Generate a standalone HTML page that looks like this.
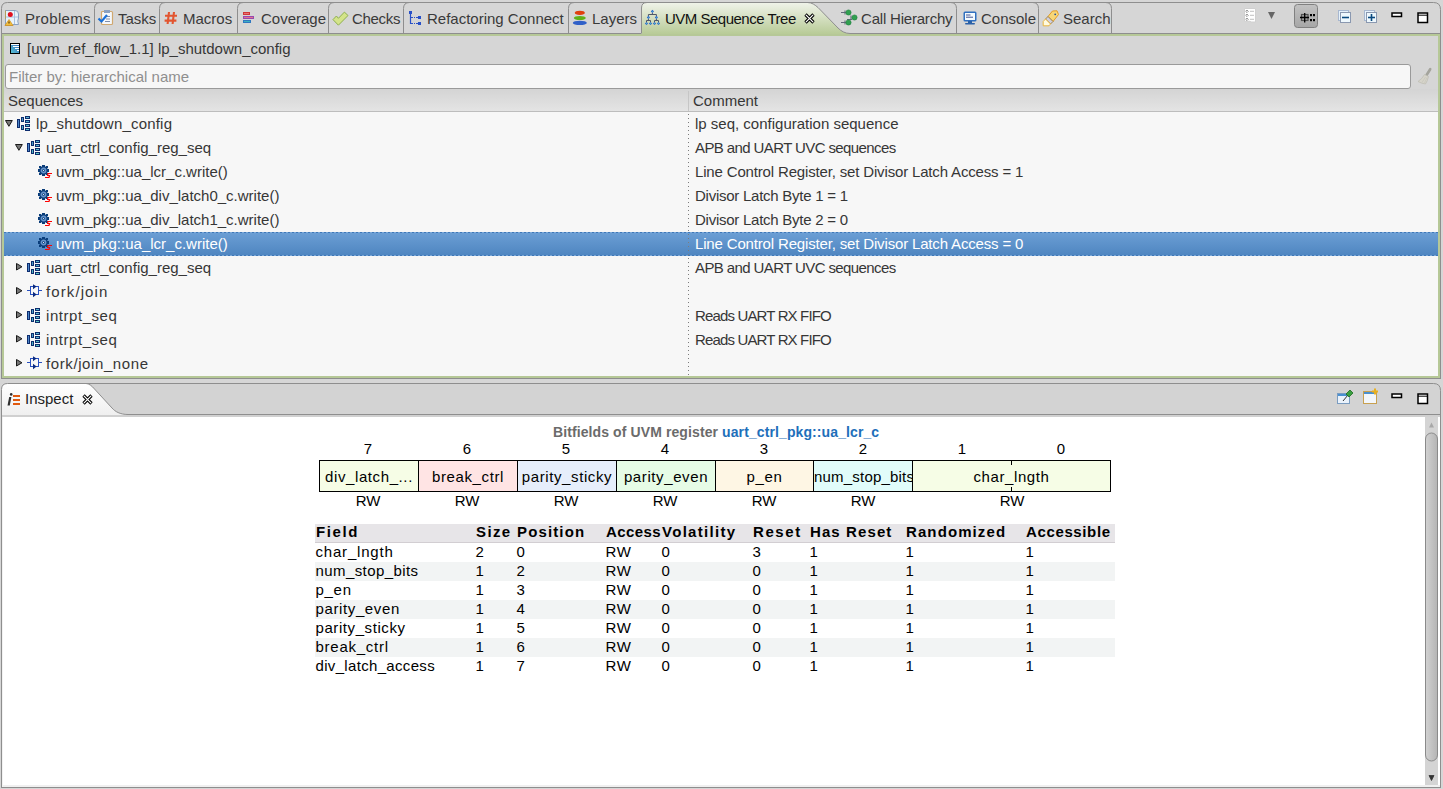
<!DOCTYPE html>
<html><head><meta charset="utf-8"><style>
*{box-sizing:border-box;margin:0;padding:0}
html,body{width:1443px;height:789px;overflow:hidden;background:#d6d6d6;font-family:"Liberation Sans",sans-serif;color:#363636}
.a{position:absolute}
.t{position:absolute;white-space:pre;font-size:15px;line-height:18px}
.tab{position:absolute;top:10px;font-size:15px;line-height:18px;white-space:pre;color:#3a3a3a}
#toppanel{left:1px;top:33px;width:1440px;height:346px;border:1px solid #8e8e8e;border-top:none;background:#d6d6d6}
#green{left:2px;top:34px;width:1438px;height:344px;border:2px solid #b6c897}
#filter{left:5px;top:64px;width:1406px;height:25px;border:1px solid #9a9a9a;border-radius:3px;background:#f7f7f7}
#hdr{left:4px;top:89px;width:1434px;height:23px;background:linear-gradient(#d4d4d4,#e4e4e4);border-bottom:1px solid #bdbdbd}
#tree{left:4px;top:112px;width:1434px;height:264px;background:#f7f7f7}
#sel{left:4px;top:232px;width:1434px;height:24px;background:linear-gradient(#6c9fd5,#4e85c0)}
.dash{position:absolute;left:4px;width:1434px;height:1px;background:repeating-linear-gradient(90deg,#3f78b8 0 2px,#7aa8d8 2px 4px)}
.dot{position:absolute;left:688px;top:114px;width:1px;height:262px;background:repeating-linear-gradient(#7c7c7c 0 1px,transparent 1px 4px)}
#ipanel{left:1px;top:383px;width:1440px;height:406px;border:1px solid #8c8c8c;border-radius:7px 7px 0 0;background:#d2d2d2}
#icontent{left:2px;top:416px;width:1438px;height:371px;background:#fff}
.bx{position:absolute;top:460px;height:32px;border:1px solid #000;font-size:15px;line-height:32px;letter-spacing:0.6px;text-align:center;color:#000;white-space:pre;overflow:hidden}
.num{position:absolute;top:440px;font-size:15px;line-height:18px;color:#000;width:20px;text-align:center}
.rw{position:absolute;top:492px;font-size:15px;line-height:18px;color:#000;width:40px;text-align:center}
.c{position:absolute;font-size:15px;line-height:19px;color:#000;white-space:pre;letter-spacing:0.6px}
</style></head><body>
<svg width="0" height="0" style="position:absolute"><defs>
<linearGradient id="ag" x1="0" y1="0" x2="0" y2="1"><stop offset="0" stop-color="#f0f3ea"/><stop offset="1" stop-color="#b8cb97"/></linearGradient>
<g id="i-seq" stroke="#0d2c6e" stroke-width="1">
<rect x="0.5" y="3.5" width="2" height="8" fill="#4a86c8"/>
<rect x="4.5" y="1.5" width="2" height="4" fill="#4a9cc8"/>
<rect x="4.5" y="9.5" width="2" height="4" fill="#4ab0c0"/>
<rect x="8.5" y="0.5" width="4" height="2" fill="#5ab8d0"/>
<rect x="8.5" y="4.5" width="4" height="2" fill="#5ab8d0"/>
<rect x="8.5" y="8.5" width="4" height="2" fill="#5ac0c8"/>
<rect x="8.5" y="12.5" width="4" height="2" fill="#5ac8c0"/>
</g>
<g id="i-gear">
<g fill="#0a3d7a"><rect x="5" y="1" width="3" height="2"/><rect x="5" y="10" width="3" height="2"/><rect x="1" y="5" width="2" height="3"/><rect x="10" y="5" width="2" height="3"/><rect x="2" y="2" width="2.2" height="2.2"/><rect x="8.8" y="2" width="2.2" height="2.2"/><rect x="2" y="8.8" width="2.2" height="2.2"/><rect x="8.8" y="8.8" width="2.2" height="2.2"/></g>
<circle cx="6.5" cy="6.5" r="3.6" fill="#6694cc" stroke="#0a3d7a" stroke-width="1.3"/>
<circle cx="6.5" cy="6.5" r="1.3" fill="#0a3d7a"/>
<circle cx="6.5" cy="6.5" r="0.55" fill="#fff"/>
<path d="M15 9.5 H11 L10.6 11.5 H12.6 L12 13.5 H8" fill="none" stroke="#ff0000" stroke-width="1.2"/>
</g>
<g id="i-fork">
<rect x="3.5" y="2.5" width="8" height="8" fill="none" stroke="#2850c0"/>
<path d="M0 6.5 H3.5 M11.5 6.5 H15" stroke="#2850c0"/>
<path d="M6 0.3 L9.6 2.5 L6 5.2 Z M6 7.8 L9.6 10.5 L6 13.2 Z" fill="#0a2a80"/>
</g>
</defs></svg>
<div id="toppanel" class="a"></div><div id="green" class="a"></div><div id="filter" class="a"></div><div id="hdr" class="a"></div><div id="tree" class="a"></div><div id="sel" class="a"></div><div class="dash" style="top:232px"></div><div class="dash" style="top:255px"></div><div class="dot"></div>
<svg class="a" style="left:10px;top:43px" width="10" height="11"><defs><linearGradient id="tg" x1="1" y1="0" x2="0" y2="1"><stop offset="0" stop-color="#3468b8"/><stop offset="1" stop-color="#5cc8d8"/></linearGradient></defs><rect x="0.5" y="0.5" width="9" height="10" fill="url(#tg)" stroke="#000"/><path d="M1 1.5 H9 M3 3.5 H9 M5 5.5 H9 M7 7.5 H9" stroke="#fff" stroke-width="1"/></svg>
<div class="t" style="left:27px;top:40px">[uvm_ref_flow_1.1] lp_shutdown_config</div>
<div class="t" style="left:9px;top:68px;color:#8f8f8f">Filter by: hierarchical name</div>
<div class="t" style="left:8px;top:92px">Sequences</div>
<div class="a" style="left:688px;top:91px;width:1px;height:20px;background:#c6c6c6"></div>
<div class="t" style="left:693px;top:92px">Comment</div>
<svg class="a" style="left:5px;top:120px" width="8" height="7"><path d="M0.5 0.5 H7.3 L3.9 6.3 Z" fill="#777" stroke="#1a1a1a" stroke-width="1"/></svg>
<svg class="a" style="left:17px;top:116px" width="13" height="15"><use href="#i-seq"/></svg>
<div class="t" style="left:36px;top:115px;color:#363636;letter-spacing:0.2px">lp_shutdown_config</div>
<div class="t" style="left:695px;top:115px;color:#363636;letter-spacing:0px">lp seq, configuration sequence</div>
<svg class="a" style="left:15px;top:144px" width="8" height="7"><path d="M0.5 0.5 H7.3 L3.9 6.3 Z" fill="#777" stroke="#1a1a1a" stroke-width="1"/></svg>
<svg class="a" style="left:27px;top:140px" width="13" height="15"><use href="#i-seq"/></svg>
<div class="t" style="left:46px;top:139px;color:#363636;letter-spacing:0px">uart_ctrl_config_reg_seq</div>
<div class="t" style="left:695px;top:139px;color:#363636;letter-spacing:-0.6px">APB and UART UVC sequences</div>
<svg class="a" style="left:37px;top:164px" width="16" height="15"><use href="#i-gear"/></svg>
<div class="t" style="left:56px;top:163px;color:#363636;letter-spacing:0px">uvm_pkg::ua_lcr_c.write()</div>
<div class="t" style="left:695px;top:163px;color:#363636;letter-spacing:-0.16px">Line Control Register, set Divisor Latch Access = 1</div>
<svg class="a" style="left:37px;top:188px" width="16" height="15"><use href="#i-gear"/></svg>
<div class="t" style="left:56px;top:187px;color:#363636;letter-spacing:0px">uvm_pkg::ua_div_latch0_c.write()</div>
<div class="t" style="left:695px;top:187px;color:#363636;letter-spacing:-0.25px">Divisor Latch Byte 1 = 1</div>
<svg class="a" style="left:37px;top:212px" width="16" height="15"><use href="#i-gear"/></svg>
<div class="t" style="left:56px;top:211px;color:#363636;letter-spacing:0px">uvm_pkg::ua_div_latch1_c.write()</div>
<div class="t" style="left:695px;top:211px;color:#363636;letter-spacing:-0.25px">Divisor Latch Byte 2 = 0</div>
<svg class="a" style="left:37px;top:236px" width="16" height="15"><use href="#i-gear"/></svg>
<div class="t" style="left:56px;top:235px;color:#fff;letter-spacing:0px">uvm_pkg::ua_lcr_c.write()</div>
<div class="t" style="left:695px;top:235px;color:#fff;letter-spacing:-0.16px">Line Control Register, set Divisor Latch Access = 0</div>
<svg class="a" style="left:16px;top:263px" width="7" height="8"><path d="M0.5 0.5 V7 L6 3.75 Z" fill="#777" stroke="#1a1a1a" stroke-width="1"/></svg>
<svg class="a" style="left:27px;top:260px" width="13" height="15"><use href="#i-seq"/></svg>
<div class="t" style="left:46px;top:259px;color:#363636;letter-spacing:0px">uart_ctrl_config_reg_seq</div>
<div class="t" style="left:695px;top:259px;color:#363636;letter-spacing:-0.6px">APB and UART UVC sequences</div>
<svg class="a" style="left:16px;top:287px" width="7" height="8"><path d="M0.5 0.5 V7 L6 3.75 Z" fill="#777" stroke="#1a1a1a" stroke-width="1"/></svg>
<svg class="a" style="left:27px;top:284px" width="15" height="14"><use href="#i-fork"/></svg>
<div class="t" style="left:46px;top:283px;color:#363636;letter-spacing:1.1px">fork/join</div>
<svg class="a" style="left:16px;top:311px" width="7" height="8"><path d="M0.5 0.5 V7 L6 3.75 Z" fill="#777" stroke="#1a1a1a" stroke-width="1"/></svg>
<svg class="a" style="left:27px;top:308px" width="13" height="15"><use href="#i-seq"/></svg>
<div class="t" style="left:46px;top:307px;color:#363636;letter-spacing:0.55px">intrpt_seq</div>
<div class="t" style="left:695px;top:307px;color:#363636;letter-spacing:-0.85px">Reads UART RX FIFO</div>
<svg class="a" style="left:16px;top:335px" width="7" height="8"><path d="M0.5 0.5 V7 L6 3.75 Z" fill="#777" stroke="#1a1a1a" stroke-width="1"/></svg>
<svg class="a" style="left:27px;top:332px" width="13" height="15"><use href="#i-seq"/></svg>
<div class="t" style="left:46px;top:331px;color:#363636;letter-spacing:0.55px">intrpt_seq</div>
<div class="t" style="left:695px;top:331px;color:#363636;letter-spacing:-0.85px">Reads UART RX FIFO</div>
<svg class="a" style="left:16px;top:359px" width="7" height="8"><path d="M0.5 0.5 V7 L6 3.75 Z" fill="#777" stroke="#1a1a1a" stroke-width="1"/></svg>
<svg class="a" style="left:27px;top:356px" width="15" height="14"><use href="#i-fork"/></svg>
<div class="t" style="left:46px;top:355px;color:#363636;letter-spacing:0.6px">fork/join_none</div>
<svg class="a" style="left:0;top:0" width="1443" height="36">
<path d="M641.5 34 V8 Q641.5 2.5 647 2.5 H807.5 C812 2.5 815 5 818 7.5 L838 28 C841 31 845 33.5 850 33.5 L850 34 Z" fill="url(#ag)"/>
<g fill="none" stroke="#8e8e8e" stroke-width="1">
<path d="M1.5 34 V8.5 Q1.5 2.5 7.5 2.5 H1433.5 Q1440.5 2.5 1440.5 9.5 V34"/>
<path d="M94.5 33 V8.5 Q94.5 2.5 100.5 2.5"/>
<path d="M159.5 33 V8.5 Q159.5 2.5 165.5 2.5"/>
<path d="M237.5 33 V8.5 Q237.5 2.5 243.5 2.5"/>
<path d="M328.5 33 V8.5 Q328.5 2.5 334.5 2.5"/>
<path d="M403.5 33 V8.5 Q403.5 2.5 409.5 2.5"/>
<path d="M568.5 33 V8.5 Q568.5 2.5 574.5 2.5"/>
<path d="M641.5 33.5 V8 Q641.5 2.5 647 2.5 H807.5 C812 2.5 815 5 818 7.5 L838 28 C841 31 845 33.5 850 33.5"/>
<path d="M956.5 33 V8.5 Q956.5 2.5 950.5 2.5"/>
<path d="M1038.5 33 V8.5 Q1038.5 2.5 1032.5 2.5"/>
<path d="M1111.5 33 V8.5 Q1111.5 2.5 1105.5 2.5"/>
<path d="M1 33.5 H641 M850 33.5 H1441"/>
</g></svg>
<svg class="a" style="left:4px;top:9px" width="16" height="18"><path d="M1.5 1.5 H11 Q14.5 1.5 14.5 5 V9 Q13 12 14.5 15.5 H9 V16.5 H1.5 Z" fill="#e8f2fa" stroke="#8aa0c0" stroke-width="1"/><path d="M1.5 1.5 V10" stroke="#b0a060"/><path d="M10.5 2 V15 M2 8 H14" stroke="#a8c0e0"/><circle cx="6.3" cy="5.5" r="2.5" fill="#e01020"/><path d="M1 16.5 L5 10.5 L9 16.5 Z" fill="#f0c040" stroke="#d09020" stroke-width="0.8"/><path d="M5 12.5 V14.5" stroke="#402000" stroke-width="1"/></svg>
<svg class="a" style="left:97px;top:9px" width="17" height="17"><rect x="4.5" y="2.5" width="11" height="13" rx="1" fill="#f4f8fc" stroke="#d0a870" stroke-width="1.2"/><rect x="7" y="1" width="6" height="3" fill="#8aa0c0"/><path d="M9 7.5 H13 M9 10 H13 M8 12.5 H13" stroke="#7080a0" stroke-width="0.9"/><path d="M1.5 9.5 L4.5 12.5 L10 6" fill="none" stroke="#1a70d8" stroke-width="2.2"/></svg>
<svg class="a" style="left:164px;top:11px" width="14" height="14"><path d="M5 1 L3.6 13 M10 1 L8.6 13 M1 4.8 H13 M0.6 9.6 H12.4" stroke="#e25530" stroke-width="2.1"/></svg>
<svg class="a" style="left:243px;top:12px" width="12" height="11"><rect x="0" y="0" width="7" height="3" fill="#d03838"/><rect x="0" y="4" width="11" height="3" fill="#9848b0"/><rect x="0" y="8" width="8" height="3" fill="#3078c0"/><path d="M1 1.5 H6 M1 5.5 H10" stroke="#f08080" stroke-width="0.8"/><path d="M1 9.5 H7" stroke="#40c0c0" stroke-width="0.8"/></svg>
<svg class="a" style="left:332px;top:11px" width="17" height="16"><path d="M1 8.6 L4.4 5 L6.4 7.3 L12.4 1.1 L16 4.5 L6.4 14.2 Z" fill="#d4e48a" stroke="#8fb050" stroke-width="1"/></svg>
<svg class="a" style="left:408px;top:10px" width="15" height="16"><g fill="#2850c8"><rect x="1" y="1" width="3" height="3"/><rect x="10" y="6" width="3" height="3"/><rect x="10" y="12" width="3" height="3"/></g><path d="M2.5 4 V13.5 H5 M2.5 7.5 H5" stroke="#2850c8" stroke-width="1.2" fill="none"/><path d="M6 7.5 H7 M8 7.5 H10 M6 13.5 H7 M8 13.5 H10" stroke="#2850c8" stroke-width="1"/></svg>
<svg class="a" style="left:572px;top:9px" width="16" height="17"><ellipse cx="7.8" cy="3.8" rx="5" ry="2.1" fill="#e04010"/><ellipse cx="7.8" cy="9" rx="6" ry="2.1" fill="#60b018"/><ellipse cx="7.8" cy="13.9" rx="7" ry="2.2" fill="#3060c8"/></svg>
<svg class="a" style="left:644px;top:8px" width="17" height="18"><g stroke="#505868" stroke-width="1" fill="none"><path d="M8.4 5 V6.5 M4.4 8 V6.5 H12.4 V8 M2.5 14 V12.5 H6.5 V14 M10.5 14 V12.5 H14.5 V14 M4.4 11 V12.5 M12.4 11 V12.5"/></g><path d="M8.4 1.7999999999999998 L10.0 3.4 L8.4 5.0 L6.800000000000001 3.4 Z M4.4 7.800000000000001 L6.0 9.4 L4.4 11.0 L2.8000000000000003 9.4 Z M12.4 7.800000000000001 L14.0 9.4 L12.4 11.0 L10.8 9.4 Z M2.5 13.9 L4.1 15.5 L2.5 17.1 L0.8999999999999999 15.5 Z M6.5 13.9 L8.1 15.5 L6.5 17.1 L4.9 15.5 Z M10.5 13.9 L12.1 15.5 L10.5 17.1 L8.9 15.5 Z M14.5 13.9 L16.1 15.5 L14.5 17.1 L12.9 15.5 Z" fill="#2a5ad0"/><rect x="7.9" y="2.9" width="1" height="1" fill="#40c0c0"/><rect x="3.9000000000000004" y="8.9" width="1" height="1" fill="#40c0c0"/><rect x="11.9" y="8.9" width="1" height="1" fill="#40c0c0"/><rect x="2.0" y="15.0" width="1" height="1" fill="#40c0c0"/><rect x="6.0" y="15.0" width="1" height="1" fill="#40c0c0"/><rect x="10.0" y="15.0" width="1" height="1" fill="#40c0c0"/><rect x="14.0" y="15.0" width="1" height="1" fill="#40c0c0"/></svg>
<svg class="a" style="left:804px;top:13px" width="11" height="11"><path d="M1.5 1.5 L9.5 9.5 M9.5 1.5 L1.5 9.5" stroke="#000" stroke-width="3.2"/><path d="M1.9 1.9 L9.1 9.1 M9.1 1.9 L1.9 9.1" stroke="#fff" stroke-width="1.2"/></svg>
<svg class="a" style="left:840px;top:9px" width="18" height="17"><path d="M1 3.5 H6 M7 10.5 H12 M1 13.5 H6 M5 1.5 V5.5 M11 6.5 V10.5 M5 11.5 V15.5" stroke="#606878" stroke-width="1.1"/><circle cx="8.5" cy="3.5" r="2.6" fill="#30a050" stroke="#208040" stroke-width="0.6"/><circle cx="14.5" cy="8.5" r="2.6" fill="#30a050" stroke="#208040" stroke-width="0.6"/><circle cx="8.5" cy="13.5" r="2.6" fill="#30a050" stroke="#208040" stroke-width="0.6"/></svg>
<svg class="a" style="left:963px;top:11px" width="14" height="14"><rect x="0.5" y="0.5" width="13" height="10" rx="1.5" fill="#3070c0"/><rect x="2" y="2" width="10" height="7" fill="#f4fbff"/><path d="M3 4 H7.5 M3 6.2 H10" stroke="#405090" stroke-width="1"/><rect x="5" y="10" width="4" height="2" fill="#2a60a8"/><rect x="2" y="12" width="10" height="1.6" rx="0.8" fill="#2a60a8"/></svg>
<svg class="a" style="left:1042px;top:10px" width="18" height="17"><path d="M10.5 1 L15 0.8 L16.5 4.5 L11 11.5 L6 6.5 Z" fill="#f7d676" stroke="#e49c24" stroke-width="1"/><circle cx="13.2" cy="4.3" r="0.9" fill="#2050a0"/><path d="M6 6.5 L11 11.5 L8.5 14 L3.5 9 Z" fill="#cfcfdf" stroke="#9a7a40" stroke-width="0.9"/><path d="M3.5 9 L8.5 14 L7 15.8 H1.2 V11.5 Z" fill="#fffbe0" stroke="#eab030" stroke-width="0.9"/></svg>
<svg class="a" style="left:1244px;top:8px" width="12" height="15"><path d="M0.5 0.5 H11.5 V14 H7 L6 13.3 H0.5 Z" fill="#fff" stroke="#d0d0d0"/><g fill="none" stroke="#808080" stroke-width="0.8"><path d="M3 2 L4.3 3.3 L3 4.6 L1.7 3.3 Z M3 6 L4.3 7.3 L3 8.6 L1.7 7.3 Z M3 10 L4.3 11.3 L3 12.6 L1.7 11.3 Z"/><path d="M6 3.3 H10 M6 7.3 H10 M6 11.3 H10" stroke="#b0b0b0"/></g></svg>
<svg class="a" style="left:1268px;top:12px" width="8" height="8"><path d="M0 0 H7 L3.5 7 Z" fill="#666"/></svg>
<svg class="a" style="left:1294px;top:4px" width="24" height="24"><defs><linearGradient id="pb" x1="0" y1="0" x2="0" y2="1"><stop offset="0" stop-color="#c2c2c2"/><stop offset="1" stop-color="#a6a6a6"/></linearGradient></defs><rect x="0.5" y="0.5" width="23" height="23" rx="3" fill="url(#pb)" stroke="#808080"/><rect x="7.5" y="10.5" width="6.5" height="6" fill="#a0a0a0" stroke="#505050" stroke-width="1.2"/><path d="M6 13.5 H15 M10.7 9 V18.5" stroke="#000" stroke-width="1.3"/><g fill="#000"><rect x="16" y="10" width="2" height="2.2"/><rect x="19" y="10" width="2" height="2.2"/><rect x="16" y="15" width="2" height="2.2"/><rect x="19" y="15" width="2" height="2.2"/></g></svg>
<svg class="a" style="left:1338px;top:10px" width="14" height="14"><rect x="0.5" y="0.5" width="10" height="10" fill="#e6f2fb" stroke="#a8b8d0"/><rect x="2.5" y="2.5" width="10" height="10" fill="#eef8fd" stroke="#8a98b0"/><path d="M4 7.5 H11" stroke="#0a4a80" stroke-width="1.6"/></svg>
<svg class="a" style="left:1364px;top:10px" width="14" height="14"><rect x="0.5" y="0.5" width="10" height="10" fill="#e6f2fb" stroke="#a8b8d0"/><rect x="2.5" y="2.5" width="10" height="10" fill="#eef8fd" stroke="#8a98b0"/><path d="M4 7.5 H11" stroke="#0a4a80" stroke-width="1.6"/><path d="M7.5 4 V11" stroke="#0a4a80" stroke-width="1.6"/></svg>
<svg class="a" style="left:1391px;top:12px" width="12" height="6"><rect x="1" y="1" width="9.5" height="3.5" fill="#fff" stroke="#000" stroke-width="1.5"/></svg>
<svg class="a" style="left:1417px;top:12px" width="12" height="12"><rect x="1" y="1" width="9.5" height="9.5" fill="#fff" stroke="#000" stroke-width="1.5"/><path d="M1 3.2 H10.5" stroke="#000" stroke-width="1"/></svg>
<svg class="a" style="left:1417px;top:67px" width="16" height="18"><path d="M13.2 2.2 L9.6 8" stroke="#a4a49c" stroke-width="2.6" stroke-linecap="round"/><path d="M7.5 7.5 L11.5 9.5 Q10.5 14 8.5 17 Q4.5 16.5 1 14.5 Q5 12 7.5 7.5 Z" fill="#d6d4ca" stroke="#bdbbb2" stroke-width="0.7"/><path d="M8.5 10 L5 15.5 M10 10.5 L7.5 16" stroke="#c4c2b8" stroke-width="0.6"/></svg>
<div class="tab" style="left:25px;letter-spacing:0.3px">Problems</div>
<div class="tab" style="left:118px;">Tasks</div>
<div class="tab" style="left:183px;">Macros</div>
<div class="tab" style="left:261px;">Coverage</div>
<div class="tab" style="left:352px;letter-spacing:-0.3px">Checks</div>
<div class="tab" style="left:427px;">Refactoring Connect</div>
<div class="tab" style="left:592px;">Layers</div>
<div class="tab" style="left:665px;color:#111;letter-spacing:-0.5px">UVM Sequence Tree</div>
<div class="tab" style="left:861px;letter-spacing:-0.2px">Call Hierarchy</div>
<div class="tab" style="left:981px;">Console</div>
<div class="tab" style="left:1063px;">Search</div>
<svg class="a" style="left:0;top:376px" width="1443" height="413">
<defs><linearGradient id="ig" x1="0" y1="0" x2="0" y2="1"><stop offset="0" stop-color="#ffffff"/><stop offset="1" stop-color="#efefef"/></linearGradient></defs>
<path d="M1.5 411.5 V13.5 Q1.5 7.5 7.5 7.5 H1433.5 Q1440.5 7.5 1440.5 14.5 V411.5 Z" fill="#d3d3d3"/>
<path d="M1.5 39 V13.5 Q1.5 7.5 7.5 7.5 H86 C89 7.5 92 10 94.5 13 L112 32 C115 35.5 120 38.5 128 38.5 H1440.5 V39 Z" fill="url(#ig)"/>
<g fill="none" stroke="#8e8e8e"><path d="M1.5 412 V13.5 Q1.5 7.5 7.5 7.5 H1433.5 Q1440.5 7.5 1440.5 14.5 V412"/><path d="M86 7.5 C89 7.5 92 10 94.5 13 L112 32 C115 35.5 120 38.5 128 38.5 H1440"/><path d="M1.5 411.5 H1440.5"/></g>
</svg>
<div class="a" style="left:2px;top:415px;width:1438px;height:2px;background:#d0d0d0"></div>
<div class="a" style="left:2px;top:417px;width:1438px;height:370px;background:#fff;border-left:1px solid #f2f2f2;border-bottom:2px solid #f0f0f0"></div>
<svg class="a" style="left:6px;top:392px" width="16" height="14"><path d="M3.2 5 H5.4 L3.8 13.5 H1.5 Z" fill="#303030"/><circle cx="5.2" cy="2.4" r="1.3" fill="#303030"/><path d="M7 4 H14 M7 8 H14 M7 12 H14" stroke="#e05a10" stroke-width="2"/></svg>
<div class="tab" style="left:25px;top:390px;color:#222">Inspect</div>
<svg class="a" style="left:82px;top:394px" width="11" height="11"><path d="M1.5 1.5 L9.5 9.5 M9.5 1.5 L1.5 9.5" stroke="#000" stroke-width="3.2"/><path d="M1.9 1.9 L9.1 9.1 M9.1 1.9 L1.9 9.1" stroke="#fff" stroke-width="1.2"/></svg>
<div class="a" style="left:1425px;top:417px;width:13px;height:368px;background:#d4d4d4"></div>
<svg class="a" style="left:1425px;top:417px" width="13" height="368">
<defs><linearGradient id="thumb" x1="0" y1="0" x2="1" y2="0"><stop offset="0" stop-color="#d2d2d2"/><stop offset="1" stop-color="#b4b4b4"/></linearGradient></defs>
<path d="M4 10.5 L6.5 5.5 L9 10.5 Z" fill="#a8a8a8"/>
<rect x="0.5" y="16" width="12" height="328" rx="6" fill="url(#thumb)" stroke="#8a8a8a"/>
<path d="M4 358.5 H9 L6.5 363.5 Z" fill="#333" stroke="#333" stroke-width="0.8"/>
</svg>
<svg class="a" style="left:1336px;top:389px" width="18" height="16"><rect x="1.5" y="4.5" width="12" height="10" fill="#eaf2fb" stroke="#7a9cc0"/><rect x="2" y="5" width="11" height="2" fill="#4a90d0"/><path d="M7 12 L12 6" stroke="#333" stroke-width="1"/><path d="M10 5 L14 1 L17 4 L13 8 Z" fill="#3aa040" stroke="#1c6a20" stroke-width="0.8"/></svg>
<svg class="a" style="left:1362px;top:388px" width="18" height="17"><rect x="1.5" y="3.5" width="13" height="12" fill="#f2f6fb" stroke="#c8a050"/><rect x="2" y="4" width="12" height="2" fill="#4a90d0"/><path d="M13 0.5 V6.5 M10 3.5 H16" stroke="#e8b020" stroke-width="2"/></svg>
<svg class="a" style="left:1391px;top:393px" width="12" height="6"><rect x="1" y="1" width="9.5" height="3.5" fill="#fff" stroke="#000" stroke-width="1.5"/></svg>
<svg class="a" style="left:1417px;top:393px" width="12" height="12"><rect x="1" y="1" width="9.5" height="9.5" fill="#fff" stroke="#000" stroke-width="1.5"/><path d="M1 3.2 H10.5" stroke="#000" stroke-width="1"/></svg>
<div class="t" style="left:553px;top:423px;font-size:14px;font-weight:bold;color:#6b6b6b;letter-spacing:0.1px">Bitfields of UVM register <span style="color:#1e6fba">uart_ctrl_pkg::ua_lcr_c</span></div>
<div class="num" style="left:358px">7</div>
<div class="num" style="left:457px">6</div>
<div class="num" style="left:556px">5</div>
<div class="num" style="left:655px">4</div>
<div class="num" style="left:754px">3</div>
<div class="num" style="left:853px">2</div>
<div class="num" style="left:952px">1</div>
<div class="num" style="left:1051px">0</div>
<div class="bx" style="left:319px;width:100px;background:#f6fde6">div_latch_...</div>
<div class="bx" style="left:418px;width:100px;background:#ffe4e4">break_ctrl</div>
<div class="bx" style="left:517px;width:100px;background:#e6eefb">parity_sticky</div>
<div class="bx" style="left:616px;width:100px;background:#e6fce6">parity_even</div>
<div class="bx" style="left:715px;width:99px;background:#fef6e4">p_en</div>
<div class="bx" style="left:813px;width:100px;background:#e1fcfa;letter-spacing:0.2px">num_stop_bits</div>
<div class="bx" style="left:912px;width:199px;background:#f6fde6">char_lngth</div>
<div class="a" style="left:1011px;top:460px;width:1px;height:5px;background:#000"></div>
<div class="a" style="left:1011px;top:487px;width:1px;height:5px;background:#000"></div>
<div class="rw" style="left:348px">RW</div>
<div class="rw" style="left:447px">RW</div>
<div class="rw" style="left:546px">RW</div>
<div class="rw" style="left:645px">RW</div>
<div class="rw" style="left:744px">RW</div>
<div class="rw" style="left:843px">RW</div>
<div class="rw" style="left:992px">RW</div>
<div class="a" style="left:315px;top:524px;width:800px;height:18px;background:#e7e5e8"></div>
<div class="a" style="left:315px;top:542px;width:800px;height:1px;background:#d2ced2"></div>
<div class="c" style="left:316px;top:522px;font-weight:bold;letter-spacing:1.6px">Field</div>
<div class="c" style="left:476px;top:522px;font-weight:bold;letter-spacing:1.4px">Size</div>
<div class="c" style="left:517px;top:522px;font-weight:bold;letter-spacing:1.14px">Position</div>
<div class="c" style="left:606px;top:522px;font-weight:bold;letter-spacing:0.4px">Access</div>
<div class="c" style="left:662px;top:522px;font-weight:bold;letter-spacing:1.3px">Volatility</div>
<div class="c" style="left:753px;top:522px;font-weight:bold;letter-spacing:1.6px">Reset</div>
<div class="c" style="left:810px;top:522px;font-weight:bold;letter-spacing:1.1px">Has Reset</div>
<div class="c" style="left:906px;top:522px;font-weight:bold;letter-spacing:1.1px">Randomized</div>
<div class="c" style="left:1026px;top:522px;font-weight:bold;letter-spacing:0.63px">Accessible</div>
<div class="c" style="left:315.5px;top:542px;letter-spacing:0.8px">char_lngth</div>
<div class="c" style="left:475.5px;top:542px">2</div>
<div class="c" style="left:516.5px;top:542px">0</div>
<div class="c" style="left:605.5px;top:542px">RW</div>
<div class="c" style="left:661.5px;top:542px">0</div>
<div class="c" style="left:752.5px;top:542px">3</div>
<div class="c" style="left:809.5px;top:542px">1</div>
<div class="c" style="left:905.5px;top:542px">1</div>
<div class="c" style="left:1025.5px;top:542px">1</div>
<div class="a" style="left:315px;top:562px;width:800px;height:19px;background:#f2f4f4"></div>
<div class="c" style="left:315.5px;top:561px;letter-spacing:0.42px">num_stop_bits</div>
<div class="c" style="left:475.5px;top:561px">1</div>
<div class="c" style="left:516.5px;top:561px">2</div>
<div class="c" style="left:605.5px;top:561px">RW</div>
<div class="c" style="left:661.5px;top:561px">0</div>
<div class="c" style="left:752.5px;top:561px">0</div>
<div class="c" style="left:809.5px;top:561px">1</div>
<div class="c" style="left:905.5px;top:561px">1</div>
<div class="c" style="left:1025.5px;top:561px">1</div>
<div class="c" style="left:315.5px;top:580px;letter-spacing:0.7px">p_en</div>
<div class="c" style="left:475.5px;top:580px">1</div>
<div class="c" style="left:516.5px;top:580px">3</div>
<div class="c" style="left:605.5px;top:580px">RW</div>
<div class="c" style="left:661.5px;top:580px">0</div>
<div class="c" style="left:752.5px;top:580px">0</div>
<div class="c" style="left:809.5px;top:580px">1</div>
<div class="c" style="left:905.5px;top:580px">1</div>
<div class="c" style="left:1025.5px;top:580px">1</div>
<div class="a" style="left:315px;top:600px;width:800px;height:19px;background:#f2f4f4"></div>
<div class="c" style="left:315.5px;top:599px;letter-spacing:0.62px">parity_even</div>
<div class="c" style="left:475.5px;top:599px">1</div>
<div class="c" style="left:516.5px;top:599px">4</div>
<div class="c" style="left:605.5px;top:599px">RW</div>
<div class="c" style="left:661.5px;top:599px">0</div>
<div class="c" style="left:752.5px;top:599px">0</div>
<div class="c" style="left:809.5px;top:599px">1</div>
<div class="c" style="left:905.5px;top:599px">1</div>
<div class="c" style="left:1025.5px;top:599px">1</div>
<div class="c" style="left:315.5px;top:618px;letter-spacing:0.58px">parity_sticky</div>
<div class="c" style="left:475.5px;top:618px">1</div>
<div class="c" style="left:516.5px;top:618px">5</div>
<div class="c" style="left:605.5px;top:618px">RW</div>
<div class="c" style="left:661.5px;top:618px">0</div>
<div class="c" style="left:752.5px;top:618px">0</div>
<div class="c" style="left:809.5px;top:618px">1</div>
<div class="c" style="left:905.5px;top:618px">1</div>
<div class="c" style="left:1025.5px;top:618px">1</div>
<div class="a" style="left:315px;top:638px;width:800px;height:19px;background:#f2f4f4"></div>
<div class="c" style="left:315.5px;top:637px;letter-spacing:0.75px">break_ctrl</div>
<div class="c" style="left:475.5px;top:637px">1</div>
<div class="c" style="left:516.5px;top:637px">6</div>
<div class="c" style="left:605.5px;top:637px">RW</div>
<div class="c" style="left:661.5px;top:637px">0</div>
<div class="c" style="left:752.5px;top:637px">0</div>
<div class="c" style="left:809.5px;top:637px">1</div>
<div class="c" style="left:905.5px;top:637px">1</div>
<div class="c" style="left:1025.5px;top:637px">1</div>
<div class="c" style="left:315.5px;top:656px;letter-spacing:0.33px">div_latch_access</div>
<div class="c" style="left:475.5px;top:656px">1</div>
<div class="c" style="left:516.5px;top:656px">7</div>
<div class="c" style="left:605.5px;top:656px">RW</div>
<div class="c" style="left:661.5px;top:656px">0</div>
<div class="c" style="left:752.5px;top:656px">0</div>
<div class="c" style="left:809.5px;top:656px">1</div>
<div class="c" style="left:905.5px;top:656px">1</div>
<div class="c" style="left:1025.5px;top:656px">1</div>
</body></html>
